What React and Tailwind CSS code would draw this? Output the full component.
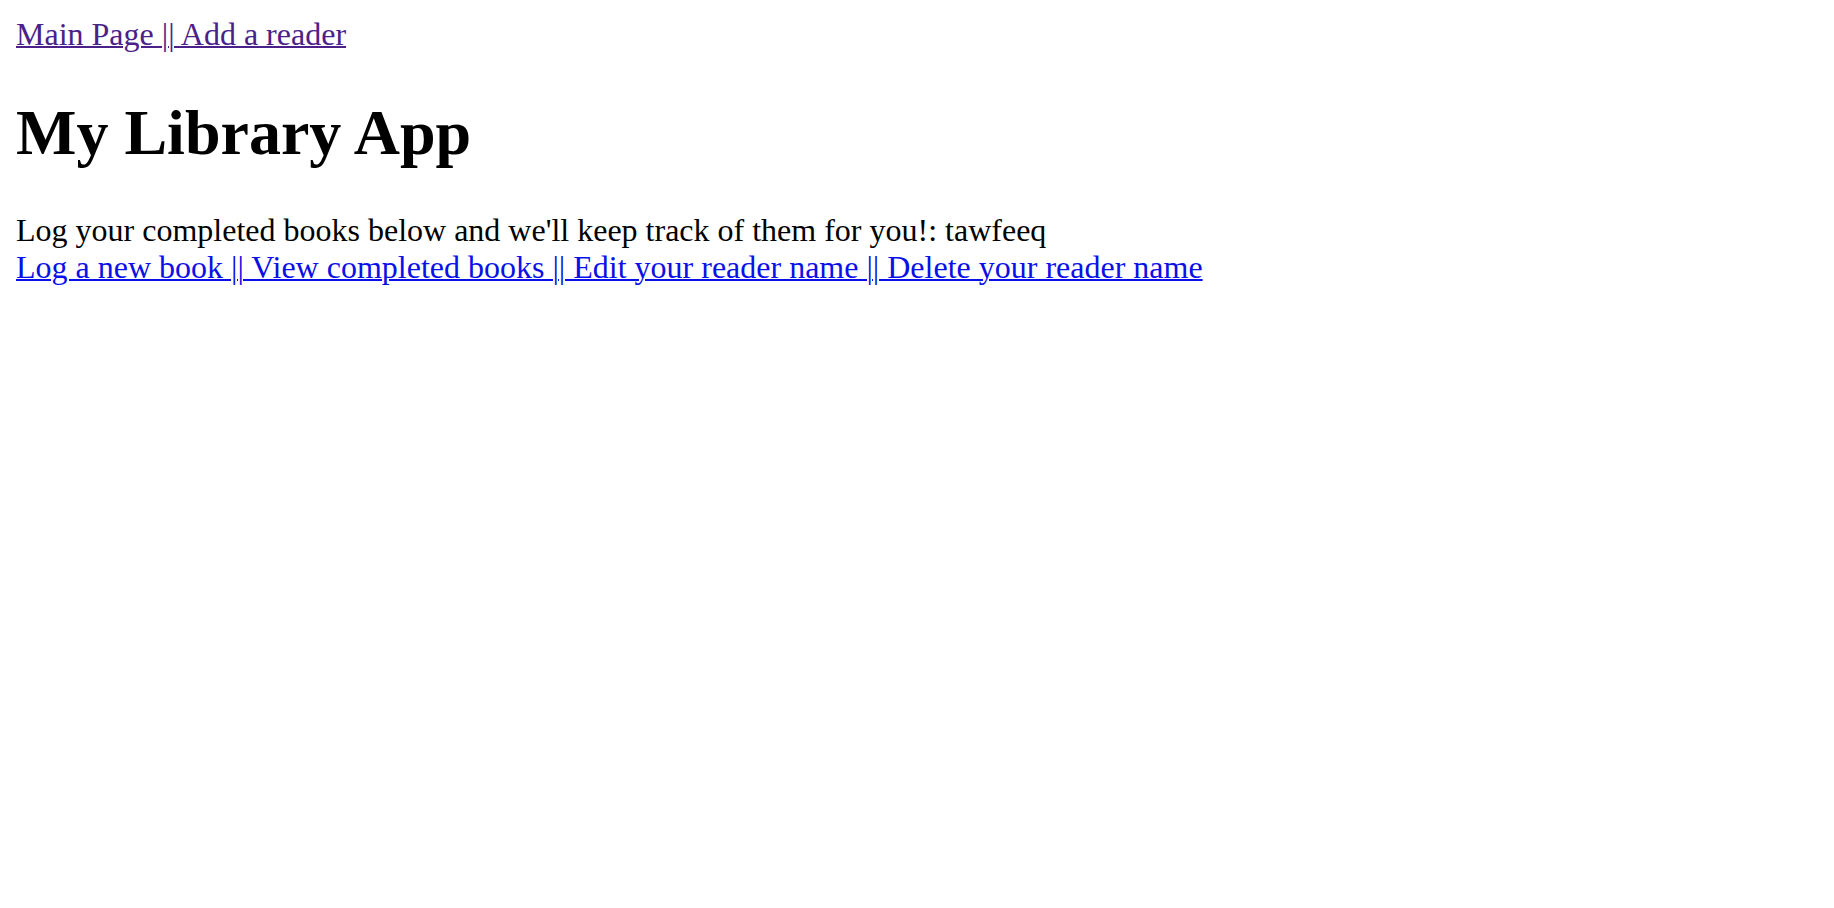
import React from 'react';

const App = () => {
  const readerName = 'tawfeeq';

  return (
    <div className="min-h-screen bg-white p-4 font-['Liberation_Serif',serif] text-[32px] leading-[36.8px] text-black">
      {/* Top nav */}
      <div>
        <a href="#" className="text-[#4b2189] underline decoration-2">
          Main Page || Add a reader
        </a>
      </div>

      <h1 className="my-[42.88px] text-[64px] font-bold leading-[73.6px]">My Library App</h1>

      <div>
        <span>Log your completed books below and we'll keep track of them for you!: {readerName}</span>
        <br />
        <a href="#" className="text-[#0a10e8] underline decoration-2">
          Log a new book || View completed books || Edit your reader name || Delete your reader name
        </a>
      </div>
    </div>
  );
};

export default App;
